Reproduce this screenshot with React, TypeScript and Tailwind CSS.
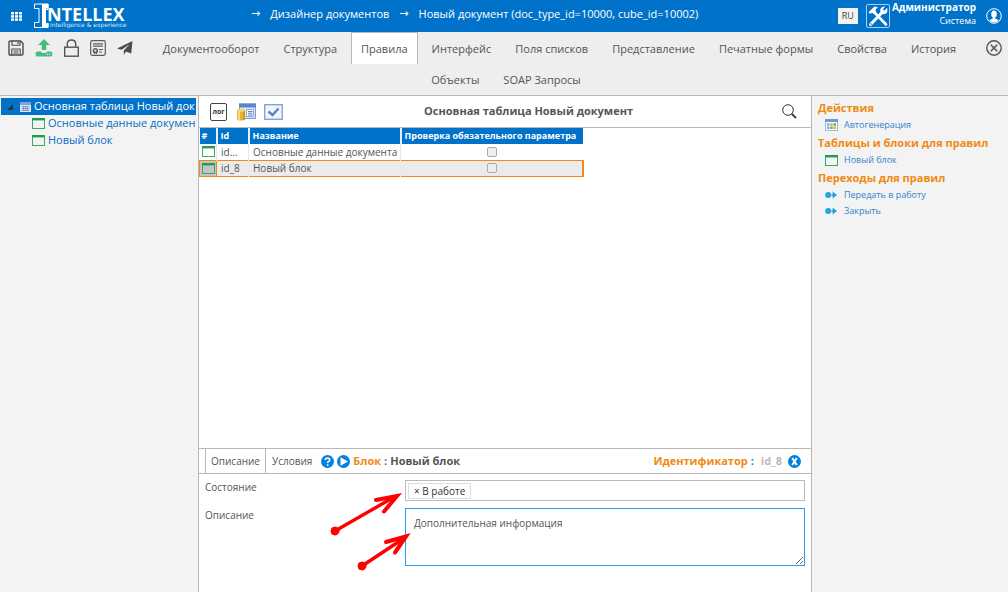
import React from 'react';
import { clsx } from 'clsx';

const primaryTabs = [
  'Документооборот',
  'Структура',
  'Правила',
  'Интерфейс',
  'Поля списков',
  'Представление',
  'Печатные формы',
  'Свойства',
  'История',
];

const secondaryTabs = ['Объекты', 'SOAP Запросы'];

const rows = [
  { id: 'id_7', shownId: 'id...', name: 'Основные данные документа', selected: false },
  { id: 'id_8', shownId: 'id_8', name: 'Новый блок', selected: true },
];

// ================= ICONS =================
const BlockIcon = ({ className }: { className?: string }) => (
  <svg viewBox="0 0 13 11" className={clsx('h-[11px] w-[13px] shrink-0', className)} aria-hidden="true">
    <rect x="0.5" y="0.5" width="12" height="10" fill="none" stroke="#3fa860" />
    <rect width="13" height="2.4" fill="#1f9d4d" />
  </svg>
);

const GridIcon = () => (
  <svg viewBox="0 0 11 9" className="h-[9px] w-[11px]" fill="#fff" aria-hidden="true">
    {[0, 4, 8].map((x) => [0, 3.2, 6.4].map((y) => <rect key={`${x}-${y}`} x={x} y={y} width="3" height="2.4" />))}
  </svg>
);

const SaveIcon = () => (
  <svg viewBox="0 0 16 16" className="h-4 w-4" fill="none" stroke="#4a4a4a" strokeWidth="1.4" aria-hidden="true">
    <path d="M1 2.2Q1 1 2.2 1H12.5L15 3.5V13.8Q15 15 13.8 15H2.2Q1 15 1 13.8Z" />
    <path d="M4 1V5.2H12V1M10 2V4M3.8 15V9H12.2V15M5.5 11H10.5M5.5 13H10.5" strokeWidth="1.1" />
  </svg>
);

const UploadIcon = () => (
  <svg viewBox="0 0 18 18" className="h-[18px] w-[18px]" fill="#45bd80" aria-hidden="true">
    <path d="M9 0L15 6H11.2V11H6.8V6H3Z" />
    <path d="M2 12.5H5.5Q6.5 14 9 14T12.5 12.5H16Q17.5 13 17.5 15T16 17.5H2Q.5 17 .5 15T2 12.5Z" />
    <circle cx="12.5" cy="15.2" r="0.7" fill="#eee" />
    <circle cx="15" cy="15.2" r="0.7" fill="#eee" />
  </svg>
);

const LockIcon = () => (
  <svg viewBox="0 0 15 18" className="h-[18px] w-[15px]" fill="none" stroke="#555" strokeWidth="1.4" aria-hidden="true">
    <rect x="0.7" y="8.2" width="13.6" height="9" />
    <path d="M3.3 8V4.6Q3.5 1 7.5 1T11.7 4.6V8" />
  </svg>
);

const CertificateIcon = () => (
  <svg viewBox="0 0 16 16" className="h-4 w-4" fill="none" stroke="#5c5c5c" strokeWidth="1.2" aria-hidden="true">
    <rect x="0.7" y="0.7" width="14.6" height="14.6" rx="1.5" />
    <path d="M3 3.8H13M3 6.2H13M8.8 9.5H13M8.8 12H12" />
    <circle cx="5.4" cy="10.6" r="1.9" strokeWidth="1.5" />
    <path d="M4.3 12V14M6.5 12V14" />
  </svg>
);

const SendIcon = () => (
  <svg viewBox="0 0 16 14" className="h-[14px] w-4" aria-hidden="true">
    <path d="M15.5 0L0 7.6L4.6 8.8L12.5 3.2L6.8 9.6V14L9 10.4L14.2 12.4Z" fill="#4b4b4b" />
  </svg>
);

const CloseIcon = () => (
  <svg viewBox="0 0 16 16" className="h-4 w-4" fill="none" stroke="#555" strokeWidth="1.4" aria-hidden="true">
    <circle cx="8" cy="8" r="7.2" />
    <path d="M4.8 4.8L11.2 11.2M11.2 4.8L4.8 11.2" strokeWidth="1.6" />
  </svg>
);

const ToolsIcon = () => (
  <svg viewBox="0 0 24 24" className="h-6 w-6" fill="none" aria-hidden="true">
    <rect x="0.5" y="0.5" width="23" height="23" rx="1.5" stroke="#a8d0f0" />
    <path d="M8.5 8.5L20 20.5" stroke="#fff" strokeWidth="2.6" strokeLinecap="round" />
    <path d="M2.5 8.3L8.5 2.5L12 3.2L9.5 5.5L10 8L7.5 10L6 8.5L4.5 10Z" fill="#fff" />
    <path d="M16.5 8L4.5 20.5" stroke="#fff" strokeWidth="3" strokeLinecap="round" />
    <path d="M21 3.8L18.5 6.8L16.8 5.5L19 2.6Q15.5 2.2 14.3 5.2Q13.8 7 14.7 8.3L16.6 10Q19 10.8 20.9 8.8Q22.2 6.5 21 3.8Z" fill="#fff" />
    <circle cx="5" cy="20" r="0.8" fill="#0072c9" />
  </svg>
);

const UserIcon = () => (
  <svg viewBox="0 0 16 16" className="h-4 w-4" aria-hidden="true">
    <circle cx="8" cy="8" r="7.3" fill="none" stroke="#fff" />
    <ellipse cx="8" cy="6" rx="2.8" ry="3.5" fill="#fff" />
    <path d="M6.8 8H9.2V10.5L12.8 12.2Q10.8 14.6 8 14.6T3.2 12.2L6.8 10.5Z" fill="#fff" />
  </svg>
);

const TableIcon = () => (
  <svg viewBox="0 0 11 10" className="h-[10px] w-[11px] shrink-0" aria-hidden="true">
    <rect width="11" height="10" fill="#dbe7f7" />
    <rect width="11" height="3" fill="#7fa3d6" />
    <path d="M1.5 4.5H9.5M1.5 6.5H9.5M1.5 8.5H9.5M3.5 4V9M5.5 4V9M7.5 4V9" stroke="#5f86c0" strokeWidth="0.7" />
  </svg>
);

const DataIcon = () => (
  <svg viewBox="0 0 19 18" className="h-[18px] w-[19px]" aria-hidden="true">
    <rect x="2.5" y="1" width="16" height="14.5" fill="#dce6f4" stroke="#7d9ed0" />
    <rect x="2" y="0.5" width="17" height="4" fill="#5c86c5" />
    <path d="M9.5 6.5H16.5V13.5H9.5Z" fill="#fff" stroke="#8fabd8" />
    <path d="M11 8.5H15.5M11 10.2H15.5M11 12H15.5" stroke="#5c86c5" strokeWidth="1" />
    <path d="M0 7.5Q0 6 4 6T8 7.5V16Q8 17.5 4 17.5T0 16Z" fill="#e9b530" />
    <path d="M2 8V17" stroke="#fbe390" strokeWidth="1.6" />
    <path d="M7 8V17" stroke="#c98d17" strokeWidth="1.4" />
    <ellipse cx="4" cy="7.4" rx="4" ry="1.4" fill="#f7d66a" />
  </svg>
);

const CheckIcon = () => (
  <svg viewBox="0 0 19 16" className="h-4 w-[19px]" aria-hidden="true">
    <rect x="0.7" y="0.7" width="17.6" height="14.6" fill="#f1f5fb" stroke="#7c9fd3" strokeWidth="1.3" />
    <path d="M4.5 7.5L8.5 11L14.5 4.5" fill="none" stroke="#5b83bf" strokeWidth="2.4" />
  </svg>
);

const SearchIcon = () => (
  <svg viewBox="0 0 15 15" className="h-[15px] w-[15px]" fill="none" stroke="#333" aria-hidden="true">
    <circle cx="6" cy="6" r="5.3" />
    <path d="M9.8 9.8L14 14" strokeWidth="1.8" />
  </svg>
);

const CalendarIcon = () => (
  <svg viewBox="0 0 13 12" className="h-3 w-[13px] shrink-0" aria-hidden="true">
    <rect x="0.5" y="0.5" width="12" height="11" fill="#fff" stroke="#9db8de" />
    <rect width="13" height="3" fill="#6f97d3" />
    <path d="M2 5.5H4.5M2 8.8H4.5" stroke="#7fa9e0" strokeWidth="2.4" />
    <path d="M5.3 5.5H7.7M8.5 8.8H11" stroke="#e6a63c" strokeWidth="2.4" />
    <path d="M8.5 5.5H11M5.3 8.8H7.7" stroke="#62ad62" strokeWidth="2.4" />
  </svg>
);

const TransitionIcon = () => (
  <svg viewBox="0 0 13 8" className="h-2 w-[13px] shrink-0" fill="#22a5da" aria-hidden="true">
    <circle cx="3.2" cy="4" r="3" />
    <path d="M6.5 3.2H7.6V.4L12 4L7.6 7.6V4.8H6.5Z" />
  </svg>
);

const Logo = () => (
  <svg viewBox="0 0 94 26" className="h-[26px] w-[94px]" role="img" aria-label="Intellex">
    <path d="M.5 1H14V6.5H11V20.5H14V24.5H.5V19.5H5V5.5H.5Z" fill="none" stroke="#fff" />
    <path d="M8 1H14.5V5.5H12V20H14.5V24.5H8Z" fill="#fff" />
    <text x="13" y="18" fill="#fff" fontFamily="Open Sans, sans-serif" fontWeight="700" fontSize="18">NTELLEX</text>
    <text x="16" y="24" fill="#d5e8f8" fontFamily="DejaVu Sans, sans-serif" fontSize="6">intelligence &amp; experience</text>
  </svg>
);

// ================= SHARED PIECES =================
const NavTab = ({ label, active = false }: { label: string; active?: boolean }) => (
  <button
    type="button"
    className={clsx(
      'h-8 border border-b-0 px-[9px] pt-0.5 text-[11px] whitespace-nowrap text-[#555]',
      active ? 'border-[#b8b8b8] bg-white' : 'border-transparent'
    )}
  >
    {label}
  </button>
);

const SideHeading = ({ children }: { children: React.ReactNode }) => (
  <h2 className="text-[11px] leading-[19px] font-bold text-[#f08a10]">{children}</h2>
);

const SideLink = ({ icon, children }: { icon: React.ReactNode; children: React.ReactNode }) => (
  <a href="#" className="flex h-4 items-center gap-1.5 pl-[7px] text-[9px] text-[#3482cc]">
    {icon}
    {children}
  </a>
);

const Header = () => (
  <header className="flex h-8 items-center bg-[#0072c9] text-white">
    <button type="button" aria-label="Меню" className="pr-3 pl-[11px]">
      <GridIcon />
    </button>
    <Logo />
    <nav className="ml-[123px] flex flex-1 items-center gap-2.5 pb-1 text-[11px] whitespace-nowrap">
      <span className="font-['DejaVu_Sans']">→</span>
      <a href="#">Дизайнер документов</a>
      <span className="font-['DejaVu_Sans']">→</span>
      <a href="#">Новый документ (doc_type_id=10000, cube_id=10002)</a>
    </nav>
    <button type="button" className="mr-2 h-4 bg-[#f2f2f2] px-1 text-[9px] leading-4 text-[#444]">RU</button>
    <button type="button" aria-label="Инструменты" className="mr-0.5">
      <ToolsIcon />
    </button>
    <div className="mr-2.5 pb-1 text-right text-[9px] leading-[13px]">
      <div className="text-[10px] font-bold">Администратор</div>
      <div>Система</div>
    </div>
    <button type="button" aria-label="Профиль" className="mr-1.5">
      <UserIcon />
    </button>
  </header>
);

const Toolbar = () => (
  <div className="border-b border-[#b8b8b8] bg-[#eee]">
    <div className="flex">
      <div className="flex h-8 items-center gap-[11px] pl-2">
        <button type="button" aria-label="Сохранить"><SaveIcon /></button>
        <button type="button" aria-label="Загрузить"><UploadIcon /></button>
        <button type="button" aria-label="Заблокировать"><LockIcon /></button>
        <button type="button" aria-label="Сертификат"><CertificateIcon /></button>
        <button type="button" aria-label="Отправить"><SendIcon /></button>
      </div>
      <div className="flex flex-1 justify-center gap-1">
        {primaryTabs.map((tab) => (
          <NavTab key={tab} label={tab} active={tab === 'Правила'} />
        ))}
      </div>
      <button type="button" aria-label="Закрыть" className="h-8 pr-1.5"><CloseIcon /></button>
    </div>
    <div className="-mt-px flex justify-center gap-1 pl-1">
      {secondaryTabs.map((tab) => (
        <NavTab key={tab} label={tab} />
      ))}
    </div>
  </div>
);

const TreePanel = () => (
  <aside className="w-[199px] shrink-0 border-r border-[#b8b8b8] bg-[#f3f3f3] py-0.5 text-[11px] whitespace-nowrap text-[#0a6cc2]">
    <a href="#" className="mr-0.5 ml-px flex h-[17px] items-center bg-[#0072c9] text-white">
      <svg viewBox="0 0 6 6" className="mr-[7px] ml-1.5 h-1.5 w-1.5 shrink-0" fill="#333" aria-hidden="true"><path d="M6 0V6H0Z" /></svg>
      <TableIcon />
      <span className="ml-[3px]">Основная таблица Новый док</span>
    </a>
    <a href="#" className="flex h-[17px] items-center gap-[3px] pl-8">
      <BlockIcon />
      <span>Основные данные докумен</span>
    </a>
    <a href="#" className="flex h-[17px] items-center gap-[3px] pl-8">
      <BlockIcon />
      <span>Новый блок</span>
    </a>
  </aside>
);

const ParamsTable = () => (
  <table className="w-[385px] table-fixed border-collapse text-[10px] leading-[14px] text-[#555]">
    <colgroup>
      <col className="w-[17px]" />
      <col className="w-8" />
      <col className="w-[152px]" />
      <col />
    </colgroup>
    <thead className="text-left text-[9px] text-white">
      <tr className="h-4 bg-[#0072c9]">
        <th className="border-r-2 border-[#e6eef6] pl-0.5 font-bold">#</th>
        <th className="border-r-2 border-[#e6eef6] pl-[3px] font-bold">Id</th>
        <th className="border-r-2 border-[#e6eef6] pl-[3px] font-bold">Название</th>
        <th className="pl-[3px] font-bold whitespace-nowrap">Проверка обязательного параметра</th>
      </tr>
    </thead>
    <tbody>
      {rows.map((row) => (
        <tr
          key={row.id}
          className={clsx('h-4', row.selected ? 'border border-r-2 border-[#f08a10] bg-[#ebebeb]' : 'bg-white')}
        >
          <td className={clsx('border-r pl-0.5', row.selected ? 'border-r-[#f08a10] bg-[#c4c4c4]' : 'border-r-[#e8e8e8]')}>
            <BlockIcon />
          </td>
          <td className="border-r border-r-[#e8e8e8] pl-1">{row.shownId}</td>
          <td className="border-r border-r-[#e8e8e8] pl-1 whitespace-nowrap">{row.name}</td>
          <td>
            <input
              type="checkbox"
              aria-label={row.name}
              className="mx-auto block h-2.5 w-2.5 appearance-none rounded-xs border border-[#aaa] bg-[#eee]"
            />
          </td>
        </tr>
      ))}
    </tbody>
  </table>
);

const BlockDetails = () => (
  <section className="relative border-t border-[#b8b8b8] pb-5">
    <div className="flex h-[25px] items-center border-b border-[#b8b8b8] pl-1.5 text-[10px] text-[#555]">
      <button type="button" className="h-full border-x border-[#b8b8b8] px-[5px]">Описание</button>
      <button type="button" className="px-1.5">Условия</button>
      <button type="button" aria-label="Справка" className="ml-[3px]">
        <svg viewBox="0 0 13 13" className="h-[13px] w-[13px]" aria-hidden="true">
          <circle cx="6.5" cy="6.5" r="6.5" fill="#0580dc" />
          <path d="M4.3 5Q4.5 3 6.6 3T8.8 4.8Q8.8 5.8 7.5 6.4Q6.6 6.8 6.6 8M6.6 9.2V10.8" fill="none" stroke="#fff" strokeWidth="1.6" />
        </svg>
      </button>
      <button type="button" aria-label="Запустить" className="ml-[3px]">
        <svg viewBox="0 0 13 13" className="h-[13px] w-[13px]" aria-hidden="true">
          <circle cx="6.5" cy="6.5" r="6.5" fill="#0580dc" />
          <path d="M3.5 2.2L11 6.5L3.5 10.8Z" fill="#fff" />
        </svg>
      </button>
      <div className="ml-[3px] flex gap-[3px] text-[11px] font-bold">
        <span className="text-[#f08a10]">Блок</span>
        <span className="text-[#0580dc]">:</span>
        <span>Новый блок</span>
      </div>
      <div className="ml-auto flex gap-[3px] text-[11px] font-bold">
        <span className="text-[#f08a10]">Идентификатор</span>
        <span className="text-[#0580dc]">:</span>
        <span className="ml-1 text-[#bbb]">id_8</span>
      </div>
      <button type="button" aria-label="Закрыть блок" className="mr-2.5 ml-1.5">
        <svg viewBox="0 0 13 13" className="h-[13px] w-[13px]" aria-hidden="true">
          <circle cx="6.5" cy="6.5" r="6.5" fill="#0580dc" />
          <path d="M4.2 3L8.8 10M8.8 3L4.2 10" stroke="#fff" strokeWidth="2" />
        </svg>
      </button>
    </div>

    <div className="grid grid-cols-[200px_1fr] gap-y-[7px] py-1.5 pr-1.5 pl-1.5 text-[10px] leading-[14px] text-[#555]">
      <label htmlFor="state">Состояние</label>
      <div className="flex h-[21px] items-center border border-[#bbb] pl-0.5">
        <button id="state" type="button" className="h-4 border border-[#ddd] px-[5px] text-[10px] leading-3 whitespace-nowrap text-[#333]">
          × В работе
        </button>
      </div>
      <label htmlFor="description">Описание</label>
      <textarea
        id="description"
        defaultValue="Дополнительная информация"
        className="block h-[58px] w-full border border-[#2e97f2] px-2 py-[7px] outline-none"
      />
    </div>

    {/* pointers to the two fields */}
    <svg viewBox="0 0 90 90" className="pointer-events-none absolute top-10 left-[130px] h-[90px] w-[90px]" stroke="#f00" fill="#f00" strokeLinecap="round" aria-hidden="true">
      <circle cx="6" cy="42" r="4" />
      <path d="M6 42L66 7.5" strokeWidth="3.4" />
      <path d="M47 11L68 7L55 22.5" fill="none" strokeWidth="4" />
      <circle cx="33" cy="77" r="4" />
      <path d="M33 77L76 48.5" strokeWidth="3.4" />
      <path d="M57 53L77 47.5L66 63.5" fill="none" strokeWidth="4" />
    </svg>
  </section>
);

const Workspace = () => (
  <main className="flex min-w-0 flex-1 flex-col bg-white">
    <div className="flex h-8 items-center border-b border-[#b8b8b8] pr-3.5 pl-[11px]">
      <div className="flex items-center gap-2">
        <button type="button" className="h-[18px] w-[17px] rounded-xs border border-[#444] text-[7px] leading-4 font-bold text-[#333]">
          лог
        </button>
        <button type="button" aria-label="Данные" className="ml-0.5"><DataIcon /></button>
        <button type="button" aria-label="Проверить"><CheckIcon /></button>
      </div>
      <h1 className="flex-1 pr-2 text-center text-[11px] font-bold text-[#555]">Основная таблица Новый документ</h1>
      <button type="button" aria-label="Поиск"><SearchIcon /></button>
    </div>
    <div className="flex-1">
      <ParamsTable />
    </div>
    <BlockDetails />
  </main>
);

const ActionsPanel = () => (
  <aside className="w-[197px] shrink-0 border-l border-[#b8b8b8] bg-[#f3f3f3] py-0.5 pl-1.5">
    <SideHeading>Действия</SideHeading>
    <SideLink icon={<CalendarIcon />}>Автогенерация</SideLink>
    <SideHeading>Таблицы и блоки для правил</SideHeading>
    <SideLink icon={<BlockIcon />}>Новый блок</SideLink>
    <SideHeading>Переходы для правил</SideHeading>
    <SideLink icon={<TransitionIcon />}>Передать в работу</SideLink>
    <SideLink icon={<TransitionIcon />}>Закрыть</SideLink>
  </aside>
);

const App = () => {
  return (
    <div className="flex min-h-screen flex-col font-['Open_Sans','Noto_Sans',sans-serif]">
      <Header />
      <Toolbar />
      <div className="flex flex-1">
        <TreePanel />
        <Workspace />
        <ActionsPanel />
      </div>
    </div>
  );
};

export default App;
